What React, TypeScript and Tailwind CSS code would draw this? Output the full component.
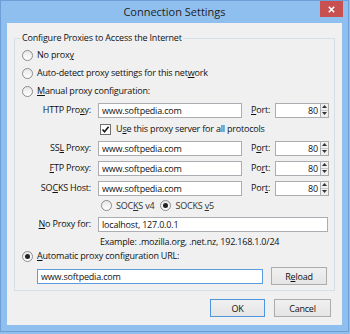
import React from "react";

// Underlined access key letter
function U({ children }: { children: React.ReactNode }) {
  return <span className="underline underline-offset-[1px]">{children}</span>;
}

function Radio({ checked = false }: { checked?: boolean }) {
  return (
    <span className="w-[11px] h-[11px] shrink-0 rounded-full border border-[#8c8c8c] bg-linear-to-b from-[#e8e8e8] to-[#ffffff] flex items-center justify-center">
      {checked && <span className="w-[5px] h-[5px] rounded-full bg-[#222]" />}
    </span>
  );
}

function Check() {
  return (
    <span className="w-[11px] h-[11px] shrink-0 border border-[#707070] bg-white flex items-center justify-center">
      <svg width="9" height="9" viewBox="0 0 9 9">
        <path d="M1.5 4.5 L3.5 6.8 L7.6 1.8" fill="none" stroke="#1a1a1a" strokeWidth="1.6" />
      </svg>
    </span>
  );
}

function Input({ value, w, focused = false }: { value: string; w: string; focused?: boolean }) {
  return (
    <div
      className={`${w} h-[15px] bg-white border ${
        focused ? "border-[#5b9ce0]" : "border-[#abadb3]"
      } flex items-center pl-[3px] leading-none whitespace-nowrap overflow-hidden`}
    >
      {value}
    </div>
  );
}

function PortBox() {
  return (
    <div className="flex items-center">
      <div className="w-[46px] h-[15px] bg-white border border-[#abadb3] flex items-center justify-end pr-[2px] leading-none">
        80
      </div>
      <div className="w-[8px] h-[15px] flex flex-col border border-l-0 border-[#acacac] bg-[#f0f0f0]">
        <div className="flex-1 flex items-center justify-center border-b border-[#c8c8c8]">
          <svg width="5" height="3" viewBox="0 0 5 3">
            <path d="M0 3 L2.5 0 L5 3 Z" fill="#333" />
          </svg>
        </div>
        <div className="flex-1 flex items-center justify-center">
          <svg width="5" height="3" viewBox="0 0 5 3">
            <path d="M0 0 L2.5 3 L5 0 Z" fill="#333" />
          </svg>
        </div>
      </div>
    </div>
  );
}

function ProxyRow({ label, port }: { label: React.ReactNode; port: React.ReactNode }) {
  return (
    <div className="h-[20px] flex items-center">
      <div className="w-[76px] text-right">{label}</div>
      <div className="ml-[7px]">
        <Input value="www.softpedia.com" w="w-[144px]" />
      </div>
      <div className="ml-[9px] w-[24px]">{port}</div>
      <PortBox />
    </div>
  );
}

function Button({ children, w, isDefault = false }: { children: React.ReactNode; w: string; isDefault?: boolean }) {
  return (
    <div
      className={`${w} h-[18px] flex items-center justify-center border ${
        isDefault ? "border-[#4f95dc]" : "border-[#acacac]"
      } bg-linear-to-b from-[#f0f0f0] to-[#e5e5e5] leading-none`}
    >
      {children}
    </div>
  );
}

export default function App() {
  return (
    <div className="w-[350px] h-[334px] bg-[#8fbfef] font-['Open_Sans',sans-serif] text-[9px] tracking-[-0.2px] text-[#111] overflow-hidden">
      <div className="w-[349px] h-[332px] border border-[#6d9fd6] flex flex-col">
        {/* title bar */}
        <div className="h-[22px] flex items-start shrink-0">
          <div className="flex-1 pl-[28px] text-center text-[11px] tracking-normal leading-[22px] text-[#222]">
            Connection Settings
          </div>
          <div className="w-[23px] h-[16px] mr-[5px] bg-[#c75050] flex items-center justify-center">
            <svg width="7" height="7" viewBox="0 0 7 7">
              <path d="M0.8 0.8 L6.2 6.2 M6.2 0.8 L0.8 6.2" stroke="#fff" strokeWidth="1.6" />
            </svg>
          </div>
        </div>

        {/* client area */}
        <div className="mx-[6px] h-[302px] bg-[#f0f0f0] flex flex-col">
          <fieldset className="mt-[8px] ml-[7px] w-[321px] border border-[#d5dfe5] pb-[3px]">
            <legend className="ml-[6px] px-[1px] leading-[14px]">Configure Proxies to Access the Internet</legend>
            <div className="pt-[1px]">
              <div className="h-[18px] flex items-center gap-[4px] pl-[7px]">
                <Radio />
                <span>
                  No prox<U>y</U>
                </span>
              </div>
              <div className="h-[18px] flex items-center gap-[4px] pl-[7px]">
                <Radio />
                <span>
                  Auto-detect proxy settings for this net<U>w</U>ork
                </span>
              </div>
              <div className="h-[18px] flex items-center gap-[4px] pl-[7px]">
                <Radio />
                <span>
                  <U>M</U>anual proxy configuration:
                </span>
              </div>

              <ProxyRow
                label={
                  <>
                    HTTP Pro<U>x</U>y:
                  </>
                }
                port={
                  <>
                    <U>P</U>ort:
                  </>
                }
              />
              <div className="h-[18px] flex items-center gap-[5px] pl-[85px]">
                <Check />
                <span>
                  U<U>s</U>e this proxy server for all protocols
                </span>
              </div>
              <ProxyRow
                label={
                  <>
                    SS<U>L</U> Proxy:
                  </>
                }
                port={
                  <>
                    P<U>o</U>rt:
                  </>
                }
              />
              <ProxyRow
                label={
                  <>
                    <U>F</U>TP Proxy:
                  </>
                }
                port={
                  <>
                    Po<U>r</U>t:
                  </>
                }
              />
              <ProxyRow
                label={
                  <>
                    SO<U>C</U>KS Host:
                  </>
                }
                port={
                  <>
                    Por<U>t</U>:
                  </>
                }
              />

              <div className="h-[15px] flex items-center pl-[86px] text-[#333]">
                <Radio />
                <span className="ml-[4px]">
                  SOC<U>K</U>S v4
                </span>
                <span className="ml-[6px]">
                  <Radio checked />
                </span>
                <span className="ml-[4px]">
                  SOCKS <U>v</U>5
                </span>
              </div>

              <div className="h-[22px] flex items-center">
                <div className="w-[76px] text-right">
                  <U>N</U>o Proxy for:
                </div>
                <div className="ml-[7px]">
                  <Input value="localhost, 127.0.0.1" w="w-[230px]" />
                </div>
              </div>
              <div className="h-[12px] flex items-center pl-[85px] leading-none">
                Example: .mozilla.org, .net.nz, 192.168.1.0/24
              </div>

              <div className="h-[18px] flex items-center gap-[4px] pl-[7px]">
                <Radio checked />
                <span>
                  <U>A</U>utomatic proxy configuration URL:
                </span>
              </div>
              <div className="h-[22px] flex items-center pl-[22px]">
                <Input value="www.softpedia.com" w="w-[226px]" focused />
                <div className="ml-[8px]">
                  <Button w="w-[56px]">
                    R<U>e</U>load
                  </Button>
                </div>
              </div>
            </div>
          </fieldset>

          <div className="mt-[8px] flex justify-end gap-[9px] pr-[11px]">
            <Button w="w-[55px]" isDefault>
              OK
            </Button>
            <Button w="w-[57px]">Cancel</Button>
          </div>
        </div>
      </div>
    </div>
  );
}
